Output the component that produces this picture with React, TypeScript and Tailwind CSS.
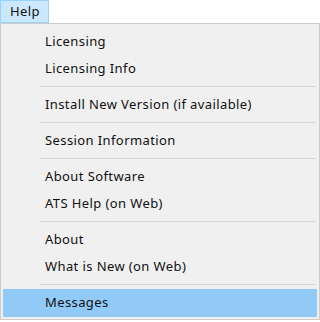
const groups: string[][] = [
  ["Licensing", "Licensing Info"],
  ["Install New Version (if available)"],
  ["Session Information"],
  ["About Software", "ATS Help (on Web)"],
  ["About", "What is New (on Web)"],
  ["Messages"],
];

const App = () => {
  return (
    <div
      className="w-[320px] h-[322px] bg-white text-[13px] tracking-[0.4px] text-[#111]"
      style={{ fontFamily: '"Noto Sans", "Open Sans", sans-serif' }}
    >
      {/* menu bar */}
      <div className="flex h-[23px]">
        <div className="w-[49px] border border-[#99d1ff] bg-[#cce8ff] flex items-center pl-[9px] leading-none">
          Help
        </div>
      </div>

      {/* dropdown */}
      <div className="w-[320px] border border-[#cccccc] bg-[#f0f0f0] pt-[4px] pb-[2px] px-[2px]">
        {groups.map((items, gi) => (
          <div key={gi}>
            {gi > 0 && (
              <div className="h-[9px] flex items-center pl-[37px] pr-[1px]">
                <div className="h-px w-full bg-[#d7d7d7]" />
              </div>
            )}
            {items.map((label) => {
              const active = label === "Messages";
              return (
                <div
                  key={label}
                  className={`flex items-center pl-[42px] ${
                    active ? "h-[28px] bg-[#91c9f7]" : "h-[27px]"
                  }`}
                >
                  {label}
                </div>
              );
            })}
          </div>
        ))}
      </div>
    </div>
  );
};

export default App;
